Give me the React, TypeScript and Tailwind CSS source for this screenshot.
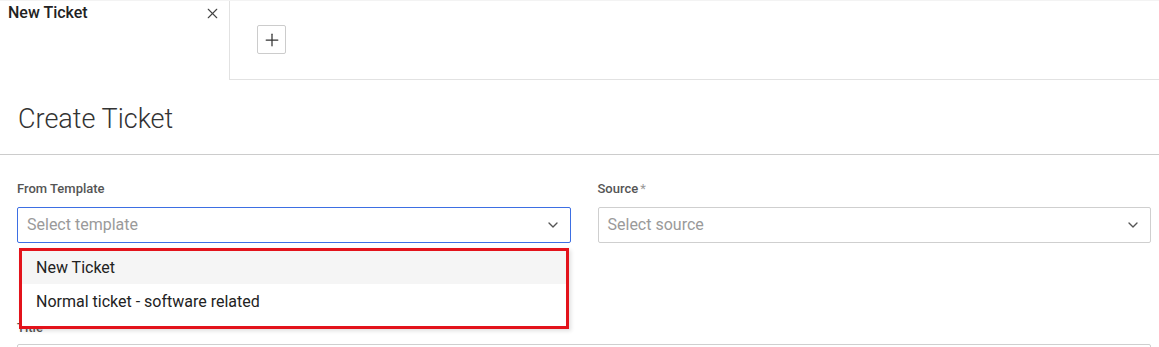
import { X, Plus, ChevronDown } from "lucide-react";

const templates = ["New Ticket", "Normal ticket - software related"];

const Select = ({ placeholder, active }: { placeholder: string; active?: boolean }) => (
  <div
    className={`flex h-[36px] items-center justify-between rounded-[2px] border bg-white pl-[9px] pr-[9px] ${
      active ? "border-[#3d6fe3]" : "border-[#cfcfcf]"
    }`}
  >
    <span className="text-[16px] text-[#9a9a9a]">{placeholder}</span>
    <ChevronDown size={16} strokeWidth={2} className="text-[#555]" />
  </div>
);

const App = () => {
  return (
    <div className="h-[347px] w-full overflow-hidden bg-white font-['Roboto',sans-serif] text-[#222]">
      {/* tabs */}
      <div className="flex h-[80px] border-t border-[#f3f3f3]">
        <div className="flex w-[229px] items-start justify-between pl-[8px] pr-[8px] pt-[2px]">
          <span className="text-[16px] font-medium leading-[20px] text-[#222]">New Ticket</span>
          <X size={17} strokeWidth={1.6} className="mt-[2px] text-[#444]" />
        </div>
        <div className="flex-1 border-b border-l border-[#e2e2e2] pl-[27px] pt-[24px]">
          <button className="flex h-[29px] w-[29px] items-center justify-center rounded-[2px] border border-[#cccccc] bg-white">
            <Plus size={20} strokeWidth={1.5} className="text-[#333]" />
          </button>
        </div>
      </div>

      {/* header */}
      <div className="flex h-[75px] items-center border-b border-[#cccccc] pl-[18px] pt-[4px]">
        <h1 className="text-[27px] font-light text-[#333]">Create Ticket</h1>
      </div>

      {/* form */}
      <div className="pl-[17px] pr-[8px] pt-[26px]">
        <div className="grid grid-cols-2 gap-[27px]">
          <div className="relative">
            <label className="mb-[10px] block text-[13px] font-medium leading-[16px] text-[#555]">
              From Template
            </label>
            <Select placeholder="Select template" active />
            <div className="absolute left-[2px] right-[2px] top-[calc(100%+5px)] z-10 border-[3px] border-[#e3131b] bg-white pb-[6px] shadow-[2px_2px_4px_rgba(0,0,0,0.12)]">
              {templates.map((t, i) => (
                <div
                  key={t}
                  className={`flex items-center pl-[14px] text-[16px] text-[#222] ${
                    i === 0 ? "h-[33px] bg-[#f5f5f5]" : "h-[36px]"
                  }`}
                >
                  {t}
                </div>
              ))}
            </div>
          </div>
          <div>
            <label className="mb-[10px] block text-[13px] font-medium leading-[16px] text-[#555]">
              Source<span className="ml-[2px] font-normal text-[#999]">*</span>
            </label>
            <Select placeholder="Select source" />
          </div>
        </div>

        <div className="mt-[77px]">
          <label className="mb-[8px] block text-[13px] font-medium leading-[16px] text-[#555]">
            Title<span className="ml-[2px] font-normal text-[#999]">*</span>
          </label>
          <div className="h-[36px] rounded-[2px] border border-[#cfcfcf]" />
        </div>
      </div>
    </div>
  );
};

export default App;
